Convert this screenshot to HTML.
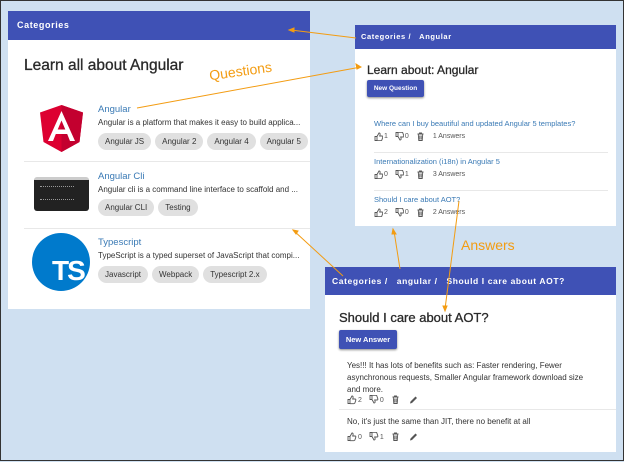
<!DOCTYPE html>
<html><head><meta charset="utf-8"><style>
*{margin:0;padding:0;box-sizing:border-box}
body{width:624px;height:461px;background:#cfe0f1;position:relative;overflow:hidden;font-family:"Liberation Sans",sans-serif;border:1px solid #333}
.p{position:absolute;background:#fff}
.hd{position:absolute;left:0;right:0;top:0;background:#3f51b5;color:#fff;font-weight:bold;font-size:9px;letter-spacing:.6px}
.a{position:absolute;white-space:nowrap}
.lk{color:#3a7ab5}
.chip{display:inline-block;background:#e0e0e0;border-radius:9px;font-size:8px;color:#333;padding:4px 7px;margin-right:4px}
.sep{position:absolute;height:1px;background:#e8e8e8}
.btn{position:absolute;background:#3f51b5;color:#fff;font-size:7.5px;font-weight:bold;border-radius:2px;box-shadow:0 1px 2px #888;text-align:center}
.ic{font-size:7px;color:#555;display:flex;align-items:center}
.ic svg{width:9px;height:9px;margin-right:1px}
.ic span{margin-right:7px}
.tt{color:#2a2a2a;-webkit-text-stroke:0.3px #2a2a2a}
</style></head><body>
<svg width="0" height="0" style="position:absolute">
<defs>
<g id="up" fill="none" stroke="#555" stroke-width="0.9"><path d="M1 4.5h2v4H1z M3 4.5L5 1c1 0 1.3.6 1 2L5.7 4h2.3c.8 0 1 .6.8 1.2l-1 3c-.2.4-.5.5-1 .5H3"/></g>
<g id="dn" fill="none" stroke="#555" stroke-width="0.9"><path d="M1 .5h2v4H1z M3 4.5L5 8c1 0 1.3-.6 1-2L5.7 5h2.3c.8 0 1-.6.8-1.2l-1-3C7.6.4 7.3.3 6.8.3H3"/></g>
<g id="tr" fill="none" stroke="#555" stroke-width="0.9"><path d="M1.5 2h6M3.5 2V1h2v1M2.3 2.5l.5 6h3.4l.5-6M3.8 3.5v4M5.2 3.5v4"/></g>
<g id="pn" fill="#555"><path d="M1 8.5L1.5 6.5 6.5 1.5 8 3 3 8z"/></g>
</defs></svg>

<div class="p" style="left:7px;top:10px;width:302px;height:298px">
 <div class="hd" style="height:29px;padding:9px 0 0 9px">Categories</div>
 <div class="a tt" style="left:16px;top:46px;font-size:15.5px">Learn all about Angular</div>
 <svg class="a" style="left:32px;top:94px" width="43" height="47" viewBox="0 0 43 47"><path d="M21.5 0L0 7.5 3.5 37 21.5 47 39.5 37 43 7.5Z" fill="#dd0031"/><path d="M21.5 0V47L39.5 37 43 7.5Z" fill="#c3002f"/><path d="M21.5 6L8 36H13L15.8 29H27.2L30 36H35ZM17.7 24.5L21.5 15.5 25.3 24.5Z" fill="#fff"/></svg>
 <div class="a lk" style="left:90px;top:93px;font-size:9.5px">Angular</div>
 <div class="a" style="left:90px;top:107px;font-size:8px;color:#333">Angular is a platform that makes it easy to build applica...</div>
 <div class="a" style="left:90px;top:120px"><span class="chip">Angular JS</span><span class="chip">Angular 2</span><span class="chip">Angular 4</span><span class="chip">Angular 5</span></div>
 <div class="sep" style="left:16px;top:150px;width:286px"></div>
 <div class="a" style="left:26px;top:166px;width:55px;height:34px;background:#222;border-radius:3px;border-top:3px solid #ccc"><div style="margin:6px 0 0 6px;width:34px;height:14px;border-top:1px dotted #999;border-bottom:1px dotted #999"></div></div>
 <div class="a lk" style="left:90px;top:160px;font-size:9.5px">Angular Cli</div>
 <div class="a" style="left:90px;top:174px;font-size:8px;color:#333">Angular cli is a command line interface to scaffold and ...</div>
 <div class="a" style="left:90px;top:186px"><span class="chip">Angular CLI</span><span class="chip">Testing</span></div>
 <div class="sep" style="left:16px;top:217px;width:286px"></div>
 <div class="a" style="left:24px;top:222px;width:58px;height:58px;border-radius:50%;background:#007acc;overflow:hidden"><span style="position:absolute;left:20px;top:22px;color:#fff;font-weight:bold;font-size:28px;letter-spacing:-2px">TS</span></div>
 <div class="a lk" style="left:90px;top:226px;font-size:9.5px">Typescript</div>
 <div class="a" style="left:90px;top:240px;font-size:8px;color:#333">TypeScript is a typed superset of JavaScript that compi...</div>
 <div class="a" style="left:90px;top:253px"><span class="chip">Javascript</span><span class="chip">Webpack</span><span class="chip">Typescript 2.x</span></div>
</div>

<div class="p" style="left:354px;top:24px;width:261px;height:201px">
 <div class="hd" style="height:24px;padding:7px 0 0 6px;font-size:7.5px">Categories / &nbsp;&nbsp;Angular</div>
 <div class="a tt" style="left:12px;top:38px;font-size:12px">Learn about: Angular</div>
 <div class="btn" style="left:12px;top:55px;width:57px;height:17px;padding-top:5px;font-size:6.5px">New Question</div>
 <div class="a lk" style="left:19px;top:94px;font-size:7.5px">Where can I buy beautiful and updated Angular 5 templates?</div>
 <div class="a ic" style="left:19px;top:107px"><svg><use href="#up"/></svg><span>1</span><svg><use href="#dn"/></svg><span>0</span><svg><use href="#tr"/></svg><span></span>1 Answers</div>
 <div class="sep" style="left:19px;top:127px;width:234px"></div>
 <div class="a lk" style="left:19px;top:132px;font-size:7.5px">Internationalization (i18n) in Angular 5</div>
 <div class="a ic" style="left:19px;top:145px"><svg><use href="#up"/></svg><span>0</span><svg><use href="#dn"/></svg><span>1</span><svg><use href="#tr"/></svg><span></span>3 Answers</div>
 <div class="sep" style="left:19px;top:165px;width:234px"></div>
 <div class="a lk" style="left:19px;top:170px;font-size:7.5px">Should I care about AOT?</div>
 <div class="a ic" style="left:19px;top:183px"><svg><use href="#up"/></svg><span>2</span><svg><use href="#dn"/></svg><span>0</span><svg><use href="#tr"/></svg><span></span>2 Answers</div>
</div>

<div class="p" style="left:324px;top:266px;width:291px;height:185px">
 <div class="hd" style="height:28px;padding:9px 0 0 7px;font-size:8.5px">Categories / &nbsp;&nbsp;angular / &nbsp;&nbsp;Should I care about AOT?</div>
 <div class="a tt" style="left:14px;top:43px;font-size:13px">Should I care about AOT?</div>
 <div class="btn" style="left:14px;top:63px;width:58px;height:19px;padding-top:5px;font-size:7.5px">New Answer</div>
 <div class="a" style="left:22px;top:93px;font-size:8px;color:#333;line-height:12px;white-space:normal;width:248px">Yes!!! It has lots of benefits such as: Faster rendering, Fewer asynchronous requests, Smaller Angular framework download size and more.</div>
 <div class="a ic" style="left:22px;top:128px"><svg style="width:10px;height:10px"><use href="#up"/></svg><span>2</span><svg style="width:10px;height:10px"><use href="#dn"/></svg><span>0</span><svg style="width:10px;height:10px"><use href="#tr"/></svg><span></span><svg style="width:10px;height:10px"><use href="#pn"/></svg></div>
 <div class="sep" style="left:14px;top:142px;width:277px"></div>
 <div class="a" style="left:22px;top:150px;font-size:8px;color:#333">No, it's just the same than JIT, there no benefit at all</div>
 <div class="a ic" style="left:22px;top:165px"><svg style="width:10px;height:10px"><use href="#up"/></svg><span>0</span><svg style="width:10px;height:10px"><use href="#dn"/></svg><span>1</span><svg style="width:10px;height:10px"><use href="#tr"/></svg><span></span><svg style="width:10px;height:10px"><use href="#pn"/></svg></div>
</div>

<div class="a" style="left:208px;top:62px;font-size:14px;color:#f39c12;transform:rotate(-8deg)">Questions</div>
<div class="a" style="left:460px;top:236px;font-size:14px;color:#f39c12">Answers</div>
<svg class="a" style="left:0;top:0" width="624" height="461">
<g stroke="#f39c12" stroke-width="1" fill="#f39c12">
<line x1="136" y1="107" x2="360" y2="66"/><path d="M360 66l-5-3 1 5z"/>
<line x1="355" y1="37" x2="290" y2="29"/><path d="M288 29l5-2 0 4z"/>
<line x1="342" y1="275" x2="292" y2="229"/><path d="M292 229l5 1-2 3z"/>
<line x1="399" y1="268" x2="393" y2="230"/><path d="M392 228l3 5h-4z"/>
<line x1="458" y1="200" x2="444" y2="308"/><path d="M444 310l-2-5h4z"/>
</g></svg>
</body></html>
